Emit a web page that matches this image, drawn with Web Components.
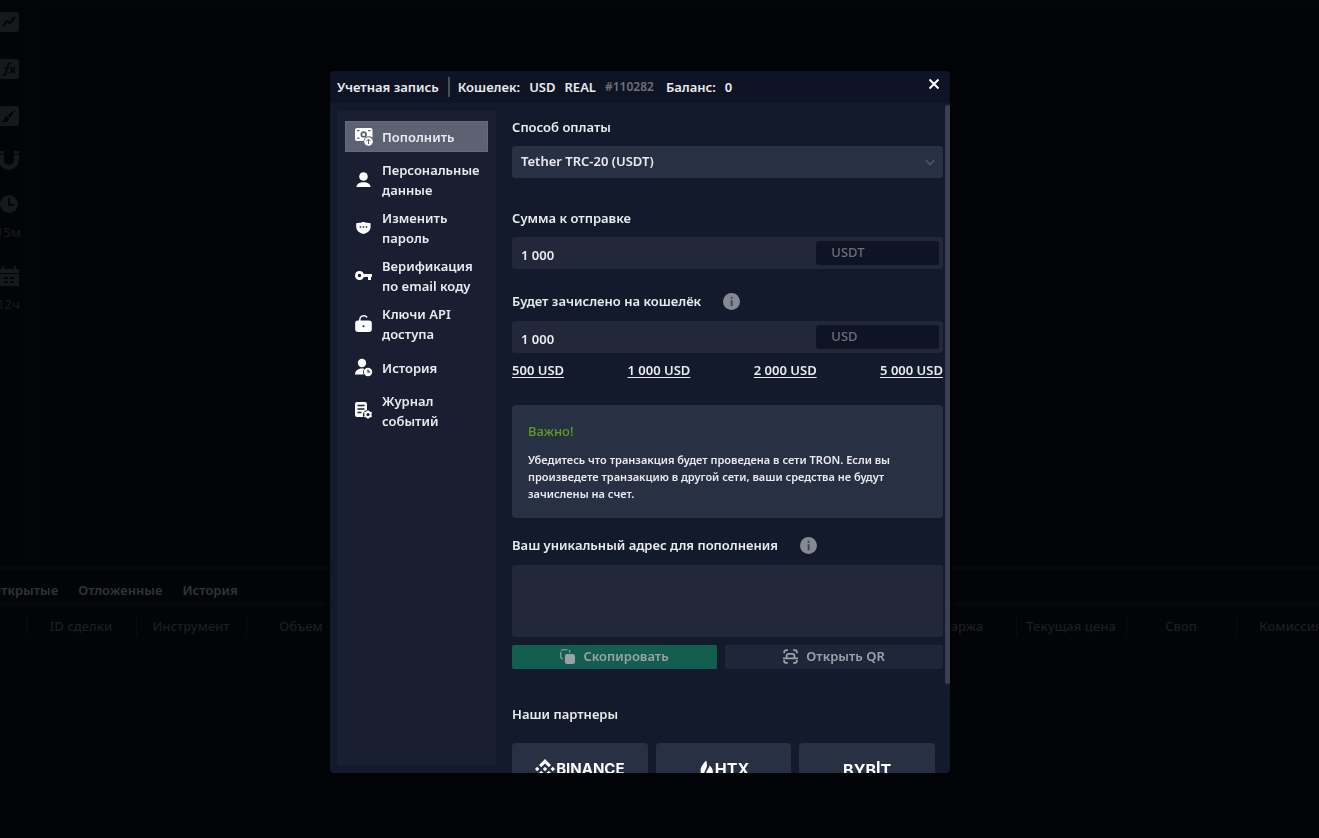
<!DOCTYPE html>
<html lang="ru">
<head>
<meta charset="utf-8">
<title>Учетная запись</title>
<style>
  html, body { height: 100%; }
  body {
    margin: 0; overflow: hidden; background: #020408; color: #e9ebee;
    font: 600 13px/20px "Noto Sans", "Open Sans", sans-serif;
    --head: #0f1424; --body: #131a2b; --side: #191f31; --active: #5d6272;
    --field: #22273a; --raised: #283044; --muted: #6c707c; --dim: #9ca0a8;
  }
</style>
</head>
<body>
<trade-desk></trade-desk>
<account-dialog></account-dialog>

<script>
const ICONS = {
  chart: '<rect width="20" height="20" rx="3"/><path d="M4 14l4-5 3 2 5-6" fill="none" stroke="#020408" stroke-width="2"/>',
  fx: '<rect width="20" height="20" rx="3"/><path d="M4 16c3 1 3-2 4-6s1-6 4-6M5 9h5M11 8l5 6M16 8l-5 6" fill="none" stroke="#020408" stroke-width="1.6"/>',
  brush: '<rect width="20" height="20" rx="3"/><path d="M17 3L9 9l2 3zM8 10c-3 1-2 4-5 6 4 1 7-1 7-4z" fill="#020408"/>',
  magnet: '<path d="M0 1h5v3H0zM15 1h5v3h-5zM0 5h5v5a5 5 0 0 0 10 0V5h5v5a10 10 0 0 1-20 0z"/>',
  clock: '<circle cx="10" cy="10" r="9"/><path d="M10 4v7h5" fill="none" stroke="#020408" stroke-width="2"/>',
  calendar: '<path d="M0 3h3V0h2v3h10V0h2v3h3v4H0zM0 8h20v12H0z"/><path d="M5 11h4v2H5zM11 11h4v2h-4zM5 15h4v2H5zM11 15h4v2h-4z" fill="#020408"/>',
  deposit: '<path fill-rule="evenodd" d="M3 1h13.500a2 2 0 0 1 2 2v7.500A5.500 5.500 0 0 0 9.500 14H3a2 2 0 0 1-2-2V3a2 2 0 0 1 2-2zM3 3v1.300h2.500V3zm11 0v1.300h2.500V3zM3 10.500v1.300h2.500v-1.300zM9.700 4.200a3.200 3.200 0 1 0 0 6.400 3.200 3.200 0 0 0 0-6.400zm0 1.700a1.500 1.500 0 1 1 0 3 1.500 1.500 0 0 1 0-3z"/><circle cx="14.500" cy="14.500" r="4.300"/><path d="M14.500 17v-4.500M12.500 14.200l2-2 2 2" fill="none" stroke="#5d6272"/>',
  person: '<circle cx="9.500" cy="6.500" r="4.300"/><path d="M2.500 17c0-3 3-4.800 7-4.800s7 1.800 7 4.800z"/>',
  shield: '<path d="M3 5c2 0 3.500-.2 5-.8.9-.3 1.900-.3 2.800 0 1.500.6 3 .8 5 .8.500 0 .8.300.8.800v3c0 3.700-3 6.400-7.100 7.200-4.100-.8-7.300-3.500-7.300-7.200v-3c0-.5.300-.8.800-.8z"/><path d="M5.700 9h1.500M8.700 9h1.500M11.700 9h1.500" stroke="#191f31" stroke-width="1.300"/>',
  key: '<path fill-rule="evenodd" d="M5.500 5a4.500 4.500 0 0 1 4.300 3H18v3h-1v3h-3v-3H9.800A4.500 4.500 0 1 1 5.500 5zm0 2.800a1.700 1.700 0 1 0 0 3.400 1.700 1.700 0 0 0 0-3.400z"/>',
  lock: '<path d="M5.800 7V5.500a4 4 0 0 1 7.300-2" fill="none" stroke="#fff" stroke-width="1.400"/><path fill-rule="evenodd" d="M4 6.500h11a2.800 2.800 0 0 1 2.800 2.800v6A2.800 2.800 0 0 1 15 18H4a2.800 2.800 0 0 1-2.800-2.700v-6A2.800 2.800 0 0 1 4 6.500zm5.500 4.700a1 1 0 1 0 0 2 1 1 0 0 0 0-2z"/>',
  history: '<circle cx="8" cy="5" r="4.200"/><path d="M1 16.500c0-3.600 2.800-6 7-6 1 0 1.600.1 2.300.4a5 5 0 0 0-.5 5.600z"/><circle cx="14" cy="14" r="4.200"/><path d="M14 11.500V14h2.300" fill="none" stroke="#191f31" stroke-width="1.100"/>',
  log: '<path d="M3 1h8a2 2 0 0 1 2 2v6a5 5 0 0 0-3.600 7H3a2 2 0 0 1-2-2V3a2 2 0 0 1 2-2z"/><path d="M3.500 4.500h7M3.500 8h7M3.500 11.500h4" stroke="#191f31" stroke-width="1.300"/><circle cx="14" cy="13.500" r="2.600" fill="none" stroke="#fff" stroke-width="2"/><path d="M14 9.300v8.400M10.300 11.400l7.400 4.200M17.700 11.400l-7.400 4.200" stroke="#fff" stroke-width="1.300"/><circle cx="14" cy="13.500" r="1.500" fill="#191f31"/>',
  close: '<path d="M5 5l10 10M15 5L5 15" fill="none" stroke="#fff" stroke-width="2.200"/>',
  chevron: '<path d="M3 7l7 7 7-7" fill="none" stroke="#4b5162" stroke-width="3"/>',
  info: '<circle cx="10" cy="10" r="10" fill="#858993"/><path d="M9 4.500h2.300v2.300H9zM9 8.500h2.300v7H9z" fill="#3f4452"/>',
  copy: '<path d="M4 13H3.500A2.500 2.500 0 0 1 1 10.500V4M1.500 2.500A2.500 2.500 0 0 1 3.500 1H10M12 1.500a2.500 2.500 0 0 1 1 2V5" fill="none" stroke="#9ca0a8" stroke-width="1.600"/><rect x="6.500" y="6.500" width="13.500" height="13.500" rx="3"/>',
  qr: '<path d="M1.500 5.500V4.500a3 3 0 0 1 3-3h2M13.500 1.500h2a3 3 0 0 1 3 3v1M1.500 14.500v1a3 3 0 0 0 3 3h2M13.500 18.500h2a3 3 0 0 0 3-3v-1M0 12.500h20M4.800 12V9a2.500 2.500 0 0 1 2.500-2.500h5.400a2.500 2.500 0 0 1 2.500 2.500V12" fill="none" stroke="#9ca0a8" stroke-width="2.400"/>',
  binance: '<path d="M10 0l6 6-2.200 2.200L10 4.400 6.200 8.200 4 6zM2.200 7.800L4.400 10l-2.200 2.200L0 10zM17.800 7.800L20 10l-2.200 2.200-2.200-2.200zM10 7.800l2.200 2.200-2.200 2.200L7.800 10zM6.200 11.800l3.800 3.800 3.800-3.800L16 14l-6 6-6-6z"/>',
  flame: '<path d="M9.500 0C7 3 3 7 3 12c0 3.500 2 6.500 5 8-1-4-1-6 1-9 2-4 2-7 .5-11zM13.500 6c0 3-4 6-4 10 0 2 .5 3 1.500 4 4 0 6.500-3 6.500-6.500 0-3-1.500-5.500-4-7.500z"/>'
};

class Base extends HTMLElement {
  constructor() {
    super();
    this.attachShadow({ mode: 'open' });
  }
  connectedCallback() {
    this.shadowRoot.innerHTML = '<style>*{box-sizing:border-box}' + this.css() + '</style>' + this.html();
  }
}

class UiIcon extends Base {
  css() { return ':host{display:inline-flex;flex:none;width:20px;height:20px;fill:currentColor}svg{width:100%;height:100%;display:block}'; }
  html() { return `<svg viewBox="0 0 20 20" aria-hidden="true">${ICONS[this.getAttribute('name')]}</svg>`; }
}
customElements.define('ui-icon', UiIcon);

class DeskToolbar extends Base {
  css() { return `
    :host { display: flex; flex-direction: column; align-items: center; width: 30px; padding-top: 10px; color: #16181b; border-right: 1px solid #05080c; box-sizing: content-box; font-weight: 500; }
    button { all: unset; display: flex; flex-direction: column; align-items: center; gap: 8px; margin: 0 12px 27px 0; }
    button.near { margin-bottom: 24px; }`; }
  html() { return `
    <button aria-label="График"><ui-icon name="chart"></ui-icon></button>
    <button aria-label="Индикаторы"><ui-icon name="fx"></ui-icon></button>
    <button class="near" aria-label="Рисование"><ui-icon name="brush"></ui-icon></button>
    <button class="near" aria-label="Магнит"><ui-icon name="magnet"></ui-icon></button>
    <button class="near"><ui-icon name="clock"></ui-icon>15м</button>
    <button><ui-icon name="calendar"></ui-icon>12ч</button>`; }
}
customElements.define('desk-toolbar', DeskToolbar);

class DeskOrders extends Base {
  css() { return `
    :host { display: block; overflow: hidden; height: 272px; border-top: 4px solid #05080c; }
    nav { display: flex; gap: 20px; height: 36px; align-items: center; padding-top: 8px; border-bottom: 4px solid #05080c; }
    a { color: #313336; text-decoration: none; }
    a:first-child { margin-left: -9px; }
    table { table-layout: fixed; border-collapse: collapse; width: 1346px; margin-top: 10px; }
    th { width: 110px; padding: 0; font-weight: 500; color: #1c1e21; border-right: 1px solid #0a0c10; text-align: center; }
    th:first-child { width: 26px; }`; }
  html() { return `
    <nav><a href="#open">Открытые</a><a href="#pending">Отложенные</a><a href="#history">История</a></nav>
    <table><thead><tr><th></th><th>ID сделки</th><th>Инструмент</th><th>Объем</th><th></th><th></th><th></th><th></th><th></th><th>Маржа</th><th>Текущая цена</th><th>Своп</th><th>Комиссия</th></tr></thead></table>`; }
}
customElements.define('desk-orders', DeskOrders);

class TradeDesk extends Base {
  css() { return `
    :host { display: flex; flex-direction: column; height: 100vh; }
    .top { flex: 1; min-height: 0; display: flex; overflow: hidden; border-top: 2px solid #030509; }
    .chart { flex: 1; margin-left: 4px; border-left: 1px solid #05080c; }`; }
  html() { return '<div class="top"><desk-toolbar></desk-toolbar><div class="chart"></div></div><desk-orders></desk-orders>'; }
}
customElements.define('trade-desk', TradeDesk);

class MenuItem extends Base {
  css() { return `
    :host { display: block; }
    a { display: flex; align-items: center; gap: 8px; min-height: 31px; padding: 0 8px 0 9px; color: inherit; text-decoration: none; }
    :host([active]) a { background: var(--active); box-shadow: 0 0 0 1px #666b7b inset; }
    ui-icon { color: #fff; }`; }
  html() { return `<a href="#${this.getAttribute('icon')}"><ui-icon name="${this.getAttribute('icon')}"></ui-icon><span><slot></slot></span></a>`; }
}
customElements.define('menu-item', MenuItem);

class AccountMenu extends Base {
  css() { return `
    :host { display: block; flex: none; width: 159px; margin: 8px 0 8px 7px; padding: 10px 8px; background: var(--side); }
    nav { display: flex; flex-direction: column; gap: 8px; }`; }
  html() { return `<nav>
    <menu-item icon="deposit" active>Пополнить</menu-item>
    <menu-item icon="person">Персональные<br>данные</menu-item>
    <menu-item icon="shield">Изменить<br>пароль</menu-item>
    <menu-item icon="key">Верификация<br>по email коду</menu-item>
    <menu-item icon="lock">Ключи API<br>доступа</menu-item>
    <menu-item icon="history">История</menu-item>
    <menu-item icon="log">Журнал<br>событий</menu-item></nav>`; }
}
customElements.define('account-menu', AccountMenu);

class AmountField extends Base {
  css() { return `
    :host { display: block; }
    .cap { display: flex; align-items: center; gap: 22px; min-height: 22px; margin-bottom: 8px; }
    :host([info]) .cap { min-height: 24px; }
    .cap ui-icon { width: 17px; height: 17px; }
    .row { display: flex; height: 32px; padding: 4px; background: var(--field); border-radius: 3px; }
    input { flex: 1; min-width: 0; border: 0; background: none; color: inherit; font: inherit; padding: 4px 5px 0; outline: 0; }
    .unit { width: 29%; padding: 0 15px; line-height: 22px; background: var(--head); color: var(--muted); border-radius: 3px; font-weight: 500; }`; }
  html() { return `
    <div class="cap"><label for="v">${this.getAttribute('label')}</label>${this.hasAttribute('info') ? '<ui-icon name="info"></ui-icon>' : ''}</div>
    <div class="row"><input id="v" value="1 000"><span class="unit">${this.getAttribute('unit')}</span></div>`; }
}
customElements.define('amount-field', AmountField);

class PartnerCard extends Base {
  css() { return `
    :host { display: block; }
    a { display: flex; justify-content: center; align-items: center; gap: 1px; height: 52px; background: var(--raised); border-radius: 4px; color: #fff; text-decoration: none; font: 700 15px/20px Inter, sans-serif; }
    :host([large]) a { gap: 0; font-size: 16px; }`; }
  html() { return '<a href="#partner"><slot></slot></a>'; }
}
customElements.define('partner-card', PartnerCard);

class DepositForm extends Base {
  css() { return `
    :host { display: block; flex: 1; min-width: 0; padding: 13px 7px 16px 16px; overflow: auto; scrollbar-width: none; }
    .cap { display: flex; align-items: center; gap: 22px; height: 22px; margin-bottom: 8px; }
    .cap.info { height: 24px; }
    .cap ui-icon { width: 17px; height: 17px; }
    .pick { display: grid; align-items: center; margin-bottom: 29px; }
    .pick > * { grid-area: 1 / 1; }
    .pick ui-icon { justify-self: end; width: 12px; height: 12px; margin-right: 7px; pointer-events: none; }
    select { appearance: none; width: 100%; height: 32px; padding: 0 9px 2px; border: 0; border-radius: 3px; background: var(--raised); color: inherit; font: inherit; }
    amount-field[info] { margin-top: 20px; }
    .sums { display: flex; justify-content: space-between; margin: 7px 0 25px; }
    .sums a { color: inherit; text-underline-offset: 2px; }
    .note { padding: 16px; margin-bottom: 15px; border-radius: 4px; background: var(--raised); font-size: 11px; line-height: 17px; }
    h3 { margin: 0 0 10px; font-size: 13px; line-height: 20px; font-weight: 500; color: #5f9d1c; }
    p { margin: 0; }
    textarea { display: block; width: 100%; height: 72px; border: 0; border-radius: 3px; background: var(--field); color: inherit; resize: none; }
    .acts { display: grid; grid-template-columns: 16fr 17fr; gap: 8px; margin: 8px 0 34px; }
    button { display: flex; align-items: center; justify-content: center; gap: 8px; height: 24px; padding: 0 0 2px; border: 0; border-radius: 2px; background: #20263a; color: var(--dim); font: inherit; }
    button.copy { background: #145e4f; }
    button ui-icon { width: 15px; height: 15px; }
    .cap.wide { margin-bottom: 18px; }
    .partners { display: grid; grid-template-columns: repeat(3, 1fr); gap: 8px; padding-right: 8px; }
    .flame { width: 17px; height: 22px; }
    .tall { vertical-align: 3px; line-height: 1; }`; }
  html() { return `
    <label class="cap" for="m">Способ оплаты</label>
    <div class="pick"><select id="m"><option>Tether TRC-20 (USDT)</option></select><ui-icon name="chevron"></ui-icon></div>
    <amount-field label="Сумма к отправке" unit="USDT"></amount-field>
    <amount-field label="Будет зачислено на кошелёк" unit="USD" info></amount-field>
    <div class="sums"><a href="#500">500 USD</a><a href="#1000">1 000 USD</a><a href="#2000">2 000 USD</a><a href="#5000">5 000 USD</a></div>
    <div class="note"><h3>Важно!</h3><p>Убедитесь что транзакция будет проведена в сети TRON. Если вы произведете транзакцию в другой сети, ваши средства не будут зачислены на счет.</p></div>
    <div class="cap info"><label for="a">Ваш уникальный адрес для пополнения</label><ui-icon name="info"></ui-icon></div>
    <textarea id="a" readonly></textarea>
    <div class="acts"><button class="copy"><ui-icon name="copy"></ui-icon>Скопировать</button><button><ui-icon name="qr"></ui-icon>Открыть QR</button></div>
    <div class="cap wide">Наши партнеры</div>
    <div class="partners">
      <partner-card><ui-icon name="binance"></ui-icon>BINANCE</partner-card>
      <partner-card large><ui-icon class="flame" name="flame"></ui-icon>HTX</partner-card>
      <partner-card large><span>BYB<span class="tall">I</span>T</span></partner-card>
    </div>`; }
}
customElements.define('deposit-form', DepositForm);

class AccountDialog extends Base {
  css() { return `
    :host { position: fixed; inset: 0; display: flex; justify-content: center; padding: 71px 39px 65px 0; }
    section { display: flex; flex-direction: column; width: 47vw; background: var(--body); border-radius: 4px; overflow: hidden; box-shadow: 0 0 6px #000; position: relative; }
    header { display: flex; align-items: center; height: 32px; flex: none; padding: 0 7px; background: var(--head); }
    h2 { margin: 0; padding-right: 9px; margin-right: 8px; font: inherit; border-right: 2px solid #4a4e5a; }
    header span { margin-right: 9px; }
    header .num { margin-right: 12px; font-size: 12px; color: var(--muted); }
    button { all: unset; display: flex; margin: 0 0 6px auto; }
    button ui-icon { width: 18px; height: 18px; }
    .main { flex: 1; min-height: 0; display: flex; }
    .thumb { position: absolute; right: 0; top: 34px; width: 5px; height: 82.500%; border-radius: 3px; background: #3b4151; }`; }
  html() { return `<section role="dialog" aria-label="Учетная запись">
    <header><h2>Учетная запись</h2><span>Кошелек:</span><span>USD</span><span>REAL</span><span class="num">#110282</span><span>Баланс:</span><span>0</span>
      <button aria-label="Закрыть"><ui-icon name="close"></ui-icon></button></header>
    <div class="main"><account-menu></account-menu><deposit-form></deposit-form></div>
    <div class="thumb"></div></section>`; }
}
customElements.define('account-dialog', AccountDialog);
</script>
</body>
</html>
